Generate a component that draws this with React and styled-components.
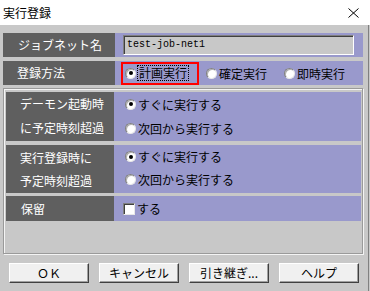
import React from 'react';
import styled, { createGlobalStyle } from 'styled-components';

const GlobalStyle = createGlobalStyle`
  html, body {
    margin: 0;
    padding: 0;
    background: #c8c8c8;
    font-family: "Noto Sans CJK JP", "Noto Sans", sans-serif;
    font-size: 12px;
  }
`;

const Dialog = styled.div`
  width: 370px;
  height: 291px;
  display: flex;
  flex-direction: column;
`;

const TitleBar = styled.div`
  height: 25px;
  background: #ffffff;
  display: flex;
  align-items: center;
  justify-content: space-between;
  padding: 0 11px 0 3px;
  box-sizing: border-box;
  color: #000;
  font-size: 12px;
`;

const Content = styled.div`
  flex: 1;
  padding: 8px 5px 0 3px;
  margin-right: 1px;
  border-right: 1px solid #808080;
`;

const Row = styled.div`
  display: grid;
  grid-template-columns: ${(p) => p.$labelW || 112}px 1fr;
  height: ${(p) => p.$h || 24}px;
  margin-bottom: ${(p) => p.$mb || 0}px;
`;

const Label = styled.div`
  background: #5f5f5f;
  color: #ffffff;
  display: flex;
  flex-direction: column;
  justify-content: ${(p) => (p.$top ? 'flex-start' : 'center')};
  padding-left: ${(p) => p.$pl || 15}px;
  line-height: ${(p) => p.$lh || 24}px;
  white-space: nowrap;
`;

const Value = styled.div`
  background: #9999cc;
  display: flex;
  flex-direction: ${(p) => (p.$col ? 'column' : 'row')};
  align-items: ${(p) => (p.$col ? 'flex-start' : 'center')};
  padding-left: ${(p) => p.$pl || 0}px;
  color: #000;
`;

const TextBox = styled.div`
  width: 231px;
  height: 20px;
  box-sizing: border-box;
  background: #c8c8c8;
  border: 1px solid;
  border-color: #808080 #ffffff #ffffff #808080;
  box-shadow: inset 1px 1px 0 #404040;
  font-family: "Liberation Mono", "DejaVu Sans Mono", monospace;
  font-size: 10px;
  line-height: 18px;
  padding-left: 3px;
  color: #000;
`;

const Option = styled.label`
  display: flex;
  align-items: center;
  height: ${(p) => p.$h || 24}px;
  margin-right: ${(p) => p.$mr || 0}px;
  white-space: nowrap;
`;

const Marked = styled.div`
  display: flex;
  align-items: center;
  height: 23px;
  box-sizing: border-box;
  border: 2px solid #ff0000;
  padding: 0 9px 0 2px;
  margin-right: 7px;
`;

const Radio = styled.span`
  position: relative;
  width: 11px;
  height: 11px;
  box-sizing: border-box;
  border-radius: 50%;
  background: #ffffff;
  border: 1px solid;
  border-color: #808080 #e8e8e8 #e8e8e8 #808080;
  box-shadow: inset 1px 1px 0 #b0b0b0;
  margin-right: 2px;
  flex: none;

  &::after {
    content: '';
    display: ${(p) => (p.$on ? 'block' : 'none')};
    position: absolute;
    left: 2.5px;
    top: 2.5px;
    width: 4px;
    height: 4px;
    border-radius: 50%;
    background: #000;
  }
`;

const Check = styled.span`
  width: 12px;
  height: 12px;
  box-sizing: border-box;
  background: #ffffff;
  border: 1px solid;
  border-color: #808080 #e8e8e8 #e8e8e8 #808080;
  box-shadow: inset 1px 1px 0 #404040;
  margin-right: 2px;
  flex: none;
`;

const Focus = styled.span`
  outline: 1px dotted #000;
  outline-offset: 0;
  line-height: 14px;
  padding: 0 1px;
`;

const GroupBox = styled.div`
  height: 166px;
  box-sizing: border-box;
  margin-top: 3px;
  padding: 3px 1px 0 2px;
  border: 1px solid #9a9a9a;
  box-shadow: inset 1px 1px 0 #f4f4f4, 1px 1px 0 #f4f4f4;
`;

const ButtonRow = styled.div`
  display: flex;
  gap: 10px;
  padding: 9px 0 0 6px;
`;

const Button = styled.button`
  width: 80px;
  height: 20px;
  padding: 0;
  background: #f0f0f0;
  border: 1px solid;
  border-color: #ffffff #404040 #404040 #ffffff;
  box-shadow: inset -1px -1px 0 #a0a0a0;
  font-family: "Noto Sans CJK JP", sans-serif;
  font-size: 12px;
  color: #000;
  line-height: 16px;
`;

const CloseIcon = () => (
  <svg width="11" height="10" viewBox="0 0 11 10">
    <path d="M0.5 0.5 L10.5 9.5 M10.5 0.5 L0.5 9.5" stroke="#000" strokeWidth="1" fill="none" />
  </svg>
);

export default function App() {
  return (
    <>
      <GlobalStyle />
      <Dialog>
        <TitleBar>
          <span>実行登録</span>
          <CloseIcon />
        </TitleBar>
        <Content>
          <Row $mb={4}>
            <Label>ジョブネット名</Label>
            <Value $pl={8}>
              <TextBox>test-job-net1</TextBox>
            </Value>
          </Row>
          <Row>
            <Label $pl={14}>登録方法</Label>
            <Value $pl={6}>
              <Marked>
                <Radio $on />
                <Focus>計画実行</Focus>
              </Marked>
              <Option $mr={17}>
                <Radio />
                確定実行
              </Option>
              <Option>
                <Radio />
                即時実行
              </Option>
            </Value>
          </Row>
          <GroupBox>
            <Row $labelW={108} $h={49} $mb={4}>
              <Label $pl={14} $top>
                <span>デーモン起動時</span>
                <span>に予定時刻超過</span>
              </Label>
              <Value $col $pl={11}>
                <Option>
                  <Radio $on />
                  すぐに実行する
                </Option>
                <Option>
                  <Radio />
                  次回から実行する
                </Option>
              </Value>
            </Row>
            <Row $labelW={108} $h={48} $mb={3}>
              <Label $pl={14} $lh={23}>
                <span>実行登録時に</span>
                <span>予定時刻超過</span>
              </Label>
              <Value $col $pl={11}>
                <Option $h={23}>
                  <Radio $on />
                  すぐに実行する
                </Option>
                <Option $h={23}>
                  <Radio />
                  次回から実行する
                </Option>
              </Value>
            </Row>
            <Row $labelW={108} $h={25}>
              <Label $pl={15}>保留</Label>
              <Value $pl={9}>
                <Option $h={25}>
                  <Check />
                  する
                </Option>
              </Value>
            </Row>
          </GroupBox>
          <ButtonRow>
            <Button>ＯＫ</Button>
            <Button>キャンセル</Button>
            <Button>引き継ぎ...</Button>
            <Button>ヘルプ</Button>
          </ButtonRow>
        </Content>
      </Dialog>
    </>
  );
}
